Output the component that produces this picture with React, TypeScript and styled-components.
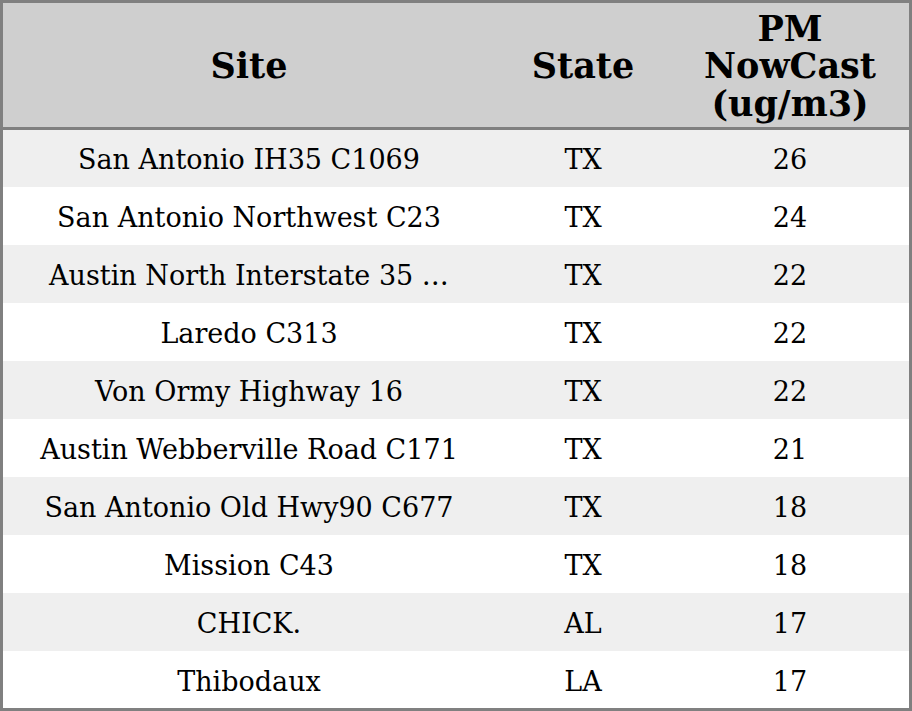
import React from 'react';
import styled, { createGlobalStyle } from 'styled-components';

const GlobalStyle = createGlobalStyle`
  html, body {
    margin: 0;
    padding: 0;
    background: #ffffff;
  }
  body {
    font-family: "DejaVu Serif", serif;
  }
`;

const Frame = styled.div`
  width: 912px;
  height: 711px;
  box-sizing: border-box;
  border: 3px solid #808080;
  overflow: hidden;
`;

const Table = styled.table`
  width: 100%;
  border-collapse: collapse;
  table-layout: fixed;
`;

const HeadRow = styled.tr`
  background: #cfcfcf;
  height: 125px;
  border-bottom: 3px solid #808080;
`;

const HeadCell = styled.th<{ $width: number }>`
  width: ${(p) => p.$width}px;
  padding: 2px 0 0;
  font-family: "DejaVu Serif", serif;
  font-weight: bold;
  font-size: 35px;
  line-height: 37.5px;
  color: #000;
  text-align: center;
  vertical-align: middle;
`;

const BodyRow = styled.tr<{ $shaded: boolean }>`
  height: 58px;
  background: ${(p) => (p.$shaded ? '#efefef' : '#ffffff')};

  &:first-child {
    height: 59px;
  }
`;

const Cell = styled.td`
  padding: 2px 0 0;
  font-family: "DejaVu Serif", serif;
  font-size: 27px;
  color: #000;
  text-align: center;
  vertical-align: middle;
  white-space: nowrap;
  overflow: hidden;
`;

const rows = [
  { site: 'San Antonio IH35 C1069', state: 'TX', pm: 26 },
  { site: 'San Antonio Northwest C23', state: 'TX', pm: 24 },
  { site: 'Austin North Interstate 35 …', state: 'TX', pm: 22 },
  { site: 'Laredo C313', state: 'TX', pm: 22 },
  { site: 'Von Ormy Highway 16', state: 'TX', pm: 22 },
  { site: 'Austin Webberville Road C171', state: 'TX', pm: 21 },
  { site: 'San Antonio Old Hwy90 C677', state: 'TX', pm: 18 },
  { site: 'Mission C43', state: 'TX', pm: 18 },
  { site: 'CHICK.', state: 'AL', pm: 17 },
  { site: 'Thibodaux', state: 'LA', pm: 17 },
];

export default function App() {
  return (
    <>
      <GlobalStyle />
      <Frame>
        <Table>
          <thead>
            <HeadRow>
              <HeadCell $width={492}>Site</HeadCell>
              <HeadCell $width={176}>State</HeadCell>
              <HeadCell $width={238}>
                PM
                <br />
                NowCast
                <br />
                (ug/m3)
              </HeadCell>
            </HeadRow>
          </thead>
          <tbody>
            {rows.map((r, i) => (
              <BodyRow key={i} $shaded={i % 2 === 0}>
                <Cell>{r.site}</Cell>
                <Cell>{r.state}</Cell>
                <Cell>{r.pm}</Cell>
              </BodyRow>
            ))}
          </tbody>
        </Table>
      </Frame>
    </>
  );
}
